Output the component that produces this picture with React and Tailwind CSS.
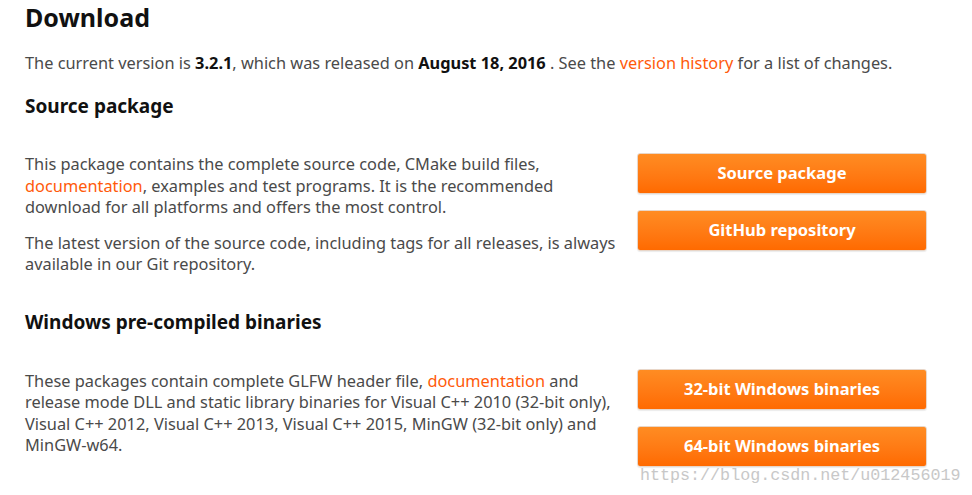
export default function App() {
  const link = "text-[#ff5a0a]";
  const Btn = ({ children }) => (
    <div className="flex h-[41px] w-[290px] items-center justify-center rounded-[3px] border border-[#e8d6c8] bg-gradient-to-b from-[#ff8c22] to-[#ff6a00] text-[16.5px] font-bold text-white shadow-[0_1px_1px_rgba(0,0,0,0.08)]">
      {children}
    </div>
  );
  return (
    <div className="h-[495px] w-[972px] overflow-hidden bg-white pl-[25px] text-[#4a4a4a]" style={{ fontFamily: '"Noto Sans", "Open Sans", sans-serif' }}>
      <h1 className="pt-[1px] text-[25px] font-bold leading-[32px] text-[#111]">Download</h1>
      <p className="mt-[19px] text-[16.35px] leading-[22px]">
        The current version is <b className="text-[#111]">3.2.1</b>, which was released on{" "}
        <b className="text-[#111]">August 18, 2016</b> . See the <span className={link}>version history</span> for a list of changes.
      </p>
      <h2 className="mt-[20px] text-[19px] font-bold leading-[24px] text-[#111]">Source package</h2>
      <div className="mt-[36px] flex gap-[14px]">
        <div className="w-[598px] text-[16.35px] leading-[21.5px]">
          <p>
            This package contains the complete source code, CMake build files,{" "}
            <span className={link}>documentation</span>, examples and test programs. It is the recommended download for all platforms and offers the most control.
          </p>
          <p className="mt-[14px]">
            The latest version of the source code, including tags for all releases, is always available in our Git repository.
          </p>
        </div>
        <div className="-mt-[1px] flex flex-col gap-[16px]">
          <Btn>Source package</Btn>
          <Btn>GitHub repository</Btn>
        </div>
      </div>
      <h2 className="mt-[34px] text-[19px] font-bold leading-[24px] text-[#111]">Windows pre-compiled binaries</h2>
      <div className="mt-[37px] flex gap-[14px]">
        <div className="w-[598px] text-[16.35px] leading-[21.5px]">
          <p>
            These packages contain complete GLFW header file, <span className={link}>documentation</span> and release mode DLL and static library binaries for Visual C++ 2010 (32-bit only), Visual C++ 2012, Visual C++ 2013, Visual C++ 2015, MinGW (32-bit only) and MinGW-w64.
          </p>
        </div>
        <div className="relative -mt-[2px] flex flex-col gap-[16px]">
          <Btn>32-bit Windows binaries</Btn>
          <Btn>64-bit Windows binaries</Btn>
          <span className="absolute left-[3px] top-[97px] whitespace-nowrap text-[16.7px] leading-[20px] text-[#c8c8c8]" style={{ fontFamily: '"Liberation Mono", monospace' }}>https://blog.csdn.net/u012456019</span>
        </div>
      </div>
    </div>
  );
}
